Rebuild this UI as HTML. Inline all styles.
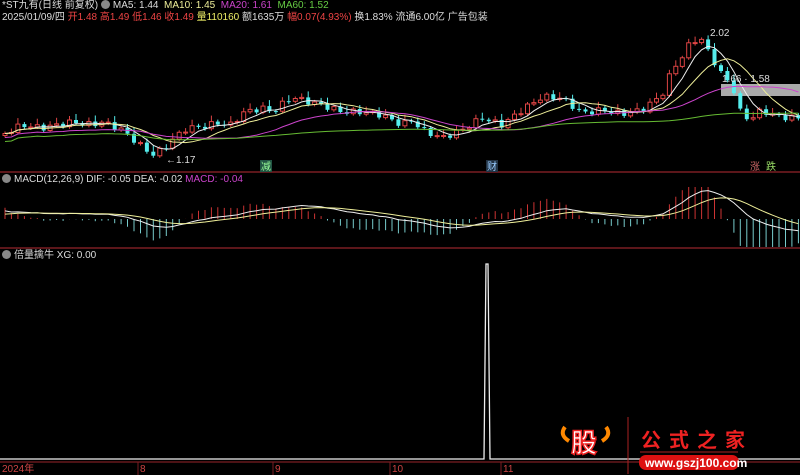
<!DOCTYPE html>
<html><head><meta charset="utf-8"><style>
html,body{margin:0;padding:0;background:#000;width:800px;height:475px;overflow:hidden}
body{position:relative;font-family:"Liberation Sans","Noto Sans CJK SC",sans-serif;font-size:10px;color:#ccc}
.t{position:absolute;white-space:nowrap;line-height:12px}
.ic{display:inline-block;width:9px;height:9px;border-radius:50%;background:#888;vertical-align:-1px;margin-right:3px}
svg{position:absolute;left:0;top:0}
</style></head><body>
<svg id="s" width="800" height="475" viewBox="0 0 800 475">
<line x1="0" y1="172" x2="800" y2="172" stroke="#7a1d22" stroke-width="1.5"/>
<line x1="0" y1="248" x2="800" y2="248" stroke="#7a1d22" stroke-width="1.5"/>
<line x1="0" y1="462" x2="800" y2="462" stroke="#7a1d22" stroke-width="1.2"/>
<g stroke="#7a1d22"><line x1="138" y1="462" x2="138" y2="475"/><line x1="273" y1="462" x2="273" y2="475"/><line x1="390" y1="462" x2="390" y2="475"/><line x1="501" y1="462" x2="501" y2="475"/></g>
<rect x="721" y="84" width="79" height="12" fill="#aaa"/>
<polyline points="0,459 484,459 486,264 488,264 490,459 800,459" fill="none" stroke="#eee" stroke-width="1.3"/>
<g id="g"></g>
<text x="2" y="472" fill="#c44" font-size="10" font-family="Liberation Sans,Noto Sans CJK SC,sans-serif">2024年</text>
<text x="140" y="472" fill="#c44" font-size="10">8</text>
<text x="275" y="472" fill="#c44" font-size="10">9</text>
<text x="392" y="472" fill="#c44" font-size="10">10</text>
<text x="503" y="472" fill="#c44" font-size="10">11</text>
<text x="166" y="163" fill="#ddd" font-size="10">←1.17</text>
<text x="710" y="36" fill="#ddd" font-size="10">2.02</text>
<text x="722" y="82" fill="#ddd" font-size="10">1.66 · 1.58</text>
<rect x="260" y="160" width="12" height="12" fill="#254"/><text x="261" y="170" fill="#9f9" font-size="10" font-family="Noto Sans CJK SC,sans-serif">减</text>
<rect x="486" y="160" width="12" height="12" fill="#234"/><text x="487" y="170" fill="#9cf" font-size="10" font-family="Noto Sans CJK SC,sans-serif">财</text>
<text x="750" y="170" fill="#c66" font-size="10" font-family="Noto Sans CJK SC,sans-serif">涨</text><text x="766" y="170" fill="#9d6" font-size="10" font-family="Noto Sans CJK SC,sans-serif">跌</text>
<path d="M565 427 q-6 8 4 14 M606 427 q6 8 -4 14" stroke="#f80" stroke-width="4" fill="none"/>
<text x="571" y="452" fill="#fff" stroke="#e22" stroke-width="1.5" font-size="26" font-weight="bold" font-family="Noto Sans CJK SC,sans-serif">股</text>
<line x1="628" y1="417" x2="628" y2="474" stroke="#a22"/>
<text x="641" y="447" fill="#e22" font-size="20" font-weight="bold" letter-spacing="8" font-family="Noto Sans CJK SC,sans-serif">公式之家</text>
<line x1="640" y1="452" x2="738" y2="452" stroke="#a22"/>
<rect x="639" y="455" width="100" height="15" rx="7" fill="#d11"/>
<text x="645" y="467" fill="#fff" font-size="12" font-weight="bold">www.gszj100.com</text>
</svg>
<div class="t" style="left:2px;top:0"><span style="color:#ddd">*ST九有(日线 前复权)</span> <span class="ic"></span><span style="color:#ddd">MA5: 1.44</span>&nbsp; <span style="color:#ee9">MA10: 1.45</span>&nbsp; <span style="color:#c4c">MA20: 1.61</span>&nbsp; <span style="color:#6c4">MA60: 1.52</span></div>
<div class="t" style="left:2px;top:12px;color:#ddd">2025/01/09/四 <span style="color:#e44">开1.48</span> <span style="color:#e44">高1.49</span> <span style="color:#e44">低1.46</span> <span style="color:#e44">收1.49</span> <span style="color:#ee6">量110160</span> 额1635万 <span style="color:#e44">幅0.07(4.93%)</span> 换1.83% 流通6.00亿 广告包装</div>
<div class="t" style="left:2px;top:174px;color:#ddd"><span class="ic"></span>MACD(12,26,9) DIF: -0.05 DEA: -0.02 <span style="color:#c4c">MACD: -0.04</span></div>
<div class="t" style="left:2px;top:250px;color:#ddd"><span class="ic"></span>倍量擒牛 XG: 0.00</div>
<script>
(function(){
var K=[[0,135],[20,125],[40,128],[70,122],[90,125],[100,122],[120,130],[150,155],[160,150],[170,140],[185,128],[200,127],[215,123],[230,125],[240,113],[260,108],[270,112],[290,97],[300,100],[320,105],[340,112],[360,112],[380,115],[400,125],[410,120],[420,130],[440,138],[460,130],[480,118],[500,125],[520,110],[540,97],[560,98],[580,113],[600,110],[620,114],[640,110],[660,95],[670,70],[680,57],[690,40],[700,40],[710,58],[720,75],[730,85],[740,117],[750,118],[760,110],[770,115],[780,117],[795,118]];
function yAt(x){for(var i=1;i<K.length;i++){if(x<=K[i][0]){var a=K[i-1],b=K[i];return a[1]+(b[1]-a[1])*(x-a[0])/(b[0]-a[0]);}}return 118;}
var N=124,sp=6.45,c=[],h='';
for(var i=0;i<N;i++){var x=3+i*sp;c.push(yAt(x)+Math.sin(i*2.3)*3);}
for(var i=0;i<N;i++){var x=3+i*sp,o=i?c[i-1]:c[0]+2,cl=c[i];var up=cl<o;var tp=Math.min(o,cl),bt=Math.max(o,cl);if(bt-tp<1)bt=tp+1;
var col=up?'#d44':'#5ee';h+='<line x1="'+(x+2).toFixed(1)+'" y1="'+(tp-2-(i%3)*2).toFixed(1)+'" x2="'+(x+2).toFixed(1)+'" y2="'+(bt+2).toFixed(1)+'" stroke="'+col+'"/>';
h+='<rect x="'+x.toFixed(1)+'" y="'+tp.toFixed(1)+'" width="4" height="'+(bt-tp).toFixed(1)+'" '+(up?'fill="#000" stroke="#d44"':'fill="#5ee"')+'/>';}
function ma(n,dy){var p=[];for(var i=0;i<N;i++){var s=0,k=0;for(var j=Math.max(0,i-n+1);j<=i;j++){s+=c[j];k++;}p.push((5+i*sp).toFixed(1)+','+(s/k+dy).toFixed(1));}return p.join(' ');}
h+='<polyline points="'+ma(5,0)+'" fill="none" stroke="#eee"/>';
h+='<polyline points="'+ma(10,0)+'" fill="none" stroke="#ee9"/>';
h+='<polyline points="'+ma(20,4)+'" fill="none" stroke="#c4c"/>';
h+='<polyline points="'+ma(60,8)+'" fill="none" stroke="#6b3"/>';
var z=219,dif=[],dea=[];
var e12=c[0]-6,e26=c[0];
for(var i=0;i<N;i++){e12+=(c[i]-e12)*2/13;e26+=(c[i]-e26)*2/27;dif.push((e26-e12)*1.6);}
var d=dif[0]-4;for(var i=0;i<N;i++){d+=(dif[i]-d)*0.2;dea.push(d);}
var p1=[],p2=[];for(var i=0;i<N;i++){var x=5+i*sp;var m=(dif[i]-dea[i])*3.5;if(m>32)m=32;if(m<-28)m=-28;h+='<line x1="'+x.toFixed(1)+'" y1="'+z+'" x2="'+x.toFixed(1)+'" y2="'+(z-m).toFixed(1)+'" stroke="'+(m>0?'#c33':'#7cc')+'"/>';p1.push(x.toFixed(1)+','+(z-dif[i]).toFixed(1));p2.push(x.toFixed(1)+','+(z-dea[i]).toFixed(1));}
h+='<polyline points="'+p1.join(' ')+'" fill="none" stroke="#eee"/><polyline points="'+p2.join(' ')+'" fill="none" stroke="#ee9"/>';
document.getElementById('g').innerHTML=h;
})();
</script>
</body></html>
